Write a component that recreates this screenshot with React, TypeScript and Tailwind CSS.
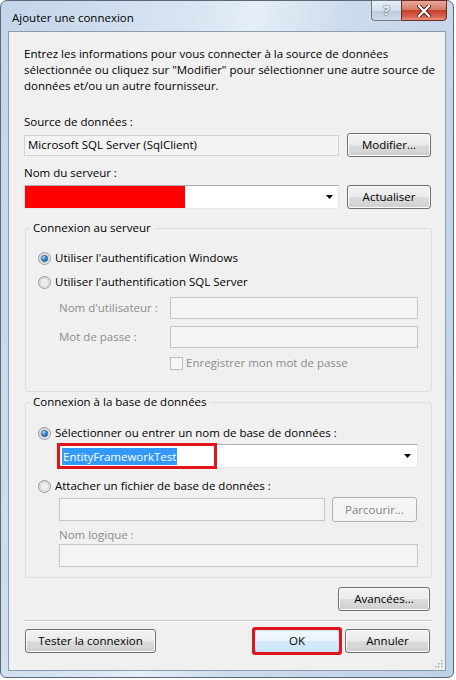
import React from 'react';

// Windows 7 "Ajouter une connexion" dialog

const btnBase =
  'flex items-center justify-center rounded-[3px] border text-[11.5px] leading-none';
const btnNormal =
  'border-[#707070] bg-[linear-gradient(180deg,#f2f2f2_0%,#ebebeb_49%,#dddddd_50%,#cfcfcf_100%)] shadow-[inset_0_0_0_1px_#fbfbfb] text-black';
const btnDisabled = 'border-[#adb2b5] bg-[#f4f4f4] text-[#838383]';
const btnDefault =
  'border-[#3c7fb1] bg-[linear-gradient(180deg,#f4fafe_0%,#e6f3fc_49%,#d5ecfa_50%,#c8e5f8_100%)] shadow-[inset_0_0_0_1px_#c6e6fa] text-black';

const Button: React.FC<{
  label: string;
  className?: string;
  disabled?: boolean;
  isDefault?: boolean;
}> = ({ label, className = '', disabled, isDefault }) => (
  <div
    className={`${btnBase} ${disabled ? btnDisabled : isDefault ? btnDefault : btnNormal} ${className}`}
  >
    {label}
  </div>
);

const Radio: React.FC<{ id: string; checked?: boolean }> = ({ id, checked }) => (
  <svg width="13" height="13" viewBox="0 0 13 13" className="shrink-0">
    <defs>
      <linearGradient id={`rb-${id}`} x1="0" y1="0" x2="1" y2="1">
        <stop offset="0" stopColor="#d8d8d8" />
        <stop offset="1" stopColor="#f6f6f6" />
      </linearGradient>
      <radialGradient id={`rd-${id}`} cx="0.35" cy="0.3" r="0.8">
        <stop offset="0" stopColor="#a6dcf9" />
        <stop offset="0.5" stopColor="#3a8ccc" />
        <stop offset="1" stopColor="#164f7e" />
      </radialGradient>
    </defs>
    <circle cx="6.5" cy="6.5" r="6" fill={`url(#rb-${id})`} stroke="#8f9aa4" strokeWidth="1" />
    <circle cx="6.5" cy="6.5" r="4.3" fill="#eeeeee" stroke="#c4c4c4" strokeWidth="0.6" />
    {checked && <circle cx="6.5" cy="6.5" r="3.2" fill={`url(#rd-${id})`} stroke="#1c4f78" strokeWidth="0.5" />}
  </svg>
);

const Arrow: React.FC = () => (
  <svg width="7" height="4" viewBox="0 0 7 4">
    <path d="M0 0h7L3.5 4z" fill="#000" />
  </svg>
);

const DisabledBox: React.FC<{ className?: string }> = ({ className = '' }) => (
  <div className={`border border-[#c3c6c9] bg-[#f4f4f4] ${className}`} />
);

const App: React.FC = () => {
  return (
    <div className="w-[456px] h-[680px] bg-white font-['Open_Sans',sans-serif] text-[11.5px] text-black">
      {/* window frame */}
      <div className="w-[454px] h-[678px] rounded-t-[7px] rounded-b-[6px] border border-[#5b6677] bg-[linear-gradient(100deg,#c3d5e9_0%,#d9e5f2_35%,#e6eef7_45%,#cddcec_60%,#bed1e6_100%)] flex flex-col">
        {/* title bar */}
        <div className="h-[30px] flex items-start shrink-0">
          <div className="pl-[11px] pt-[9px] leading-[16px] text-black">Ajouter une connexion</div>
          <div className="ml-auto mr-[6px] -mt-[1px] flex">
            <div className="w-[30px] h-[21px] rounded-bl-[4px] border border-[#6a788a] border-r-0 bg-[linear-gradient(180deg,#e7eef6_0%,#d3dfec_50%,#bac9da_51%,#cfdbe8_100%)] flex items-center justify-center">
              <span className="text-[13px] font-bold leading-none text-white [text-shadow:0_0_2px_#39475a,0_0_1px_#39475a]">?</span>
            </div>
            <div className="w-[46px] h-[21px] rounded-br-[4px] border border-[#6b2a23] bg-[linear-gradient(180deg,#e9a99b_0%,#d67a68_45%,#c3412c_50%,#d3604c_80%,#e8937e_100%)] flex items-center justify-center">
              <svg width="14" height="12" viewBox="0 0 14 12">
                <path d="M2 1l10 10M12 1L2 11" stroke="#4a1a14" strokeWidth="4" strokeLinecap="square" />
                <path d="M2 1l10 10M12 1L2 11" stroke="#ffffff" strokeWidth="2.2" strokeLinecap="square" />
              </svg>
            </div>
          </div>
        </div>

        {/* client area */}
        <div className="relative ml-[7px] w-[438px] h-[640px] border border-[#8b9bb0] bg-[#f0f0f0] pl-[15px] pt-[14px]">
          <div className="w-[408px]">
            <p className="w-[416px] leading-[16px]">
              Entrez les informations pour vous connecter à la source de données sélectionnée ou
              cliquez sur "Modifier" pour sélectionner une autre source de données et/ou un autre
              fournisseur.
            </p>

            <div className="mt-[20px] leading-[16px]">Source de données :</div>
            <div className="mt-[3px] h-[24px] flex items-center gap-[8px]">
              <div className="w-[315px] h-[21px] border border-[#d0d3d7] bg-[#f3f3f3] flex items-center pl-[3px] leading-none">
                Microsoft SQL Server (SqlClient)
              </div>
              <Button label="Modifier..." className="w-[84px] h-[24px]" />
            </div>

            <div className="mt-[8px] leading-[16px]">Nom du serveur :</div>
            <div className="mt-[4px] h-[24px] flex items-center gap-[8px]">
              <div className="w-[315px] h-[24px] border border-[#abadb3] border-l-[#e2e3ea] border-r-[#e3e9ef] border-b-[#e3e9ef] bg-white flex items-stretch">
                <div className="w-[160px] bg-[#ff0000]" />
                <div className="ml-auto mr-[5px] flex items-center">
                  <Arrow />
                </div>
              </div>
              <Button label="Actualiser" className="w-[84px] h-[24px]" />
            </div>

            {/* Connexion au serveur */}
            <fieldset className="mt-[11px] ml-[1px] w-[407px] rounded-[3px] border border-[#d5dfe5] pb-[20px]">
              <legend className="ml-[4px] px-[3px] leading-[16px]">Connexion au serveur</legend>
              <div className="mt-[14px] pl-[12px] h-[16px] flex items-center gap-[4px]">
                <Radio id="win" checked />
                <span className="leading-[16px]">Utiliser l'authentification Windows</span>
              </div>
              <div className="mt-[8px] pl-[12px] h-[16px] flex items-center gap-[4px]">
                <Radio id="sql" />
                <span className="leading-[16px]">Utiliser l'authentification SQL Server</span>
              </div>
              <div className="mt-[7px] pl-[33px] flex items-center">
                <span className="w-[111px] text-[#8d8d8d] leading-[16px]">Nom d'utilisateur :</span>
                <DisabledBox className="w-[248px] h-[22px]" />
              </div>
              <div className="mt-[7px] pl-[33px] flex items-center">
                <span className="w-[111px] text-[#8d8d8d] leading-[16px]">Mot de passe :</span>
                <DisabledBox className="w-[248px] h-[22px]" />
              </div>
              <div className="mt-[7px] pl-[144px] h-[16px] flex items-center gap-[3px]">
                <div className="w-[13px] h-[13px] border border-[#bcbcbc] bg-[#f6f6f6]" />
                <span className="text-[#8d8d8d] leading-[16px]">Enregistrer mon mot de passe</span>
              </div>
            </fieldset>

            {/* Connexion à la base de données */}
            <fieldset className="mt-[2px] ml-[1px] w-[407px] rounded-[3px] border border-[#d5dfe5] pb-[10px]">
              <legend className="ml-[4px] px-[3px] leading-[16px]">Connexion à la base de données</legend>
              <div className="mt-[15px] pl-[12px] h-[16px] flex items-center gap-[4px]">
                <Radio id="db" checked />
                <span className="leading-[16px]">Sélectionner ou entrer un nom de base de données :</span>
              </div>
              <div className="mt-[3px] ml-[32px] relative w-[360px] h-[24px] border border-[#abadb3] border-l-[#e2e3ea] border-r-[#e3e9ef] border-b-[#e3e9ef] bg-white flex items-center">
                <span className="ml-[3px] h-[17px] px-[1px] bg-[#3399ff] text-white leading-[17px]">EntityFrameworkTest</span>
                <div className="ml-auto mr-[6px] flex items-center">
                  <Arrow />
                </div>
                <div className="absolute -left-[2px] -top-[2px] w-[160px] h-[26px] border-[3px] border-[#e0141b]" />
              </div>
              <div className="mt-[10px] pl-[12px] h-[16px] flex items-center gap-[4px]">
                <Radio id="file" />
                <span className="leading-[16px]">Attacher un fichier de base de données :</span>
              </div>
              <div className="mt-[3px] ml-[33px] h-[25px] flex items-center gap-[7px]">
                <DisabledBox className="w-[266px] h-[23px]" />
                <Button label="Parcourir..." disabled className="w-[85px] h-[25px]" />
              </div>
              <div className="mt-[5px] ml-[33px] text-[#8d8d8d] leading-[16px]">Nom logique :</div>
              <DisabledBox className="mt-[1px] ml-[33px] w-[359px] h-[23px]" />
            </fieldset>

            <div className="mt-[9px] flex justify-end pr-[2px]">
              <Button label="Avancées..." className="w-[92px] h-[24px]" />
            </div>

            <div className="mt-[9px] h-px bg-[#c9cdd1] shadow-[0_1px_0_#ffffff]" />

            <div className="mt-[8px] flex items-center pr-[2px]">
              <Button label="Tester la connexion" className="ml-[1px] w-[131px] h-[24px]" />
              <div className="ml-auto rounded-[1px] outline-[3px] outline-solid outline-[#e0141b] -outline-offset-[1px]">
                <Button label="OK" isDefault className="w-[86px] h-[24px]" />
              </div>
              <Button label="Annuler" className="ml-[5px] w-[85px] h-[24px]" />
            </div>
          </div>

          {/* size grip */}
          <svg className="absolute right-[2px] bottom-[2px]" width="10" height="10" viewBox="0 0 10 10">
            {[
              [8, 2],
              [8, 5],
              [5, 5],
              [8, 8],
              [5, 8],
              [2, 8],
            ].map(([x, y]) => (
              <rect key={`${x}-${y}`} x={x} y={y} width="1.5" height="1.5" fill="#a4a9b0" />
            ))}
          </svg>
        </div>
      </div>
    </div>
  );
};

export default App;
